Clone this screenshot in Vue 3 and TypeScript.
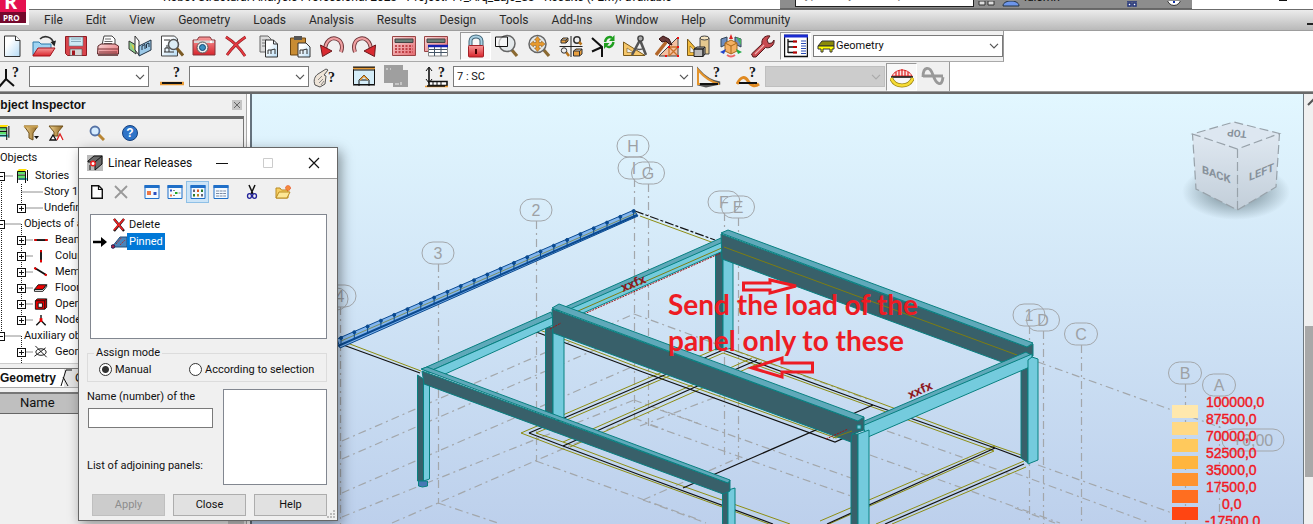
<script setup lang="ts">
import { ref } from 'vue'

const menus = ['File', 'Edit', 'View', 'Geometry', 'Loads', 'Analysis', 'Results', 'Design', 'Tools', 'Add-Ins', 'Window', 'Help', 'Community']

const fileTools = ['new', 'open', 'save', 'print', 'capture', 'preview', 'camera', 'remove', 'copy', 'paste', 'undo', 'redo']
const calcTools = ['calc', 'calctable']
const viewTools = ['lock', 'zoomwin', 'zoomall', 'views', 'refresh', 'compass', 'hammer', 'shapes', 'cube', 'wrench']

interface TreeRow { kind: 'plain' | 'root' | 'story' | 'leaf' | 'sub' | 'child'; label: string; icon?: string; sign?: string }
const tree: TreeRow[] = [
  { kind: 'plain', label: 'Objects' },
  { kind: 'story', label: 'Stories', icon: 'stories', sign: '-' },
  { kind: 'leaf', label: 'Story 1' },
  { kind: 'sub', label: 'Undefined', sign: '+' },
  { kind: 'root', label: 'Objects of a model', sign: '-' },
  { kind: 'child', label: 'Beams', icon: 't-beam', sign: '+' },
  { kind: 'child', label: 'Columns', icon: 't-column', sign: '+' },
  { kind: 'child', label: 'Members', icon: 't-member', sign: '+' },
  { kind: 'child', label: 'Floors', icon: 't-floor', sign: '+' },
  { kind: 'child', label: 'Openings', icon: 't-opening', sign: '+' },
  { kind: 'child', label: 'Nodes', icon: 't-node', sign: '+' },
  { kind: 'root', label: 'Auxiliary objects', sign: '-' },
  { kind: 'child', label: 'Geometry', icon: 't-geom', sign: '+' },
]

const mode = ref('manual')
const panelName = ref('')
const viewModes = ['v-large', 'v-small', 'v-grid', 'v-list']

interface Bubble { t: string; x: number; y: number; w: number; end: number }
const bubbles: Bubble[] = [
  { t: '4', x: 340, y: 296, w: 32, end: 524 },
  { t: '', x: 332, y: 299, w: 32, end: 300 },
  { t: '3', x: 438, y: 253, w: 32, end: 504 },
  { t: '2', x: 536, y: 210, w: 32, end: 462 },
  { t: 'H', x: 633, y: 146, w: 32, end: 157 },
  { t: 'I', x: 634, y: 168, w: 32, end: 420 },
  { t: 'G', x: 648, y: 173, w: 33, end: 426 },
  { t: 'F', x: 724, y: 202, w: 32, end: 455 },
  { t: 'E', x: 738, y: 207, w: 33, end: 460 },
  { t: '1', x: 1029, y: 315, w: 32, end: 524 },
  { t: 'D', x: 1043, y: 320, w: 33, end: 524 },
  { t: 'C', x: 1081, y: 334, w: 33, end: 524 },
  { t: 'B', x: 1185, y: 373, w: 33, end: 524 },
  { t: 'A', x: 1219, y: 385, w: 33, end: 524 },
  { t: '+6,00', x: 1253, y: 440, w: 62, end: 451 },
]

const gridLines = [
  '342,441 634,314', '342,459 634,333', '342,493 634,366', '342,517 634,400', '392,523 634,418',
  '634,314 870,400', '1038,362 1222,428',
  '438,503 498,523', '536,461 700,520', '660,410 851,478', '650,425 851,496', '643,500 706,523',
  '643,500 738,458', '634,418 665,430', '634,400 700,424', '640,426 724,394',
  '870,425 1010,474', '870,455 1060,523',
  '1038,465 1172,513', '1015,473 1150,523', '1015,508 1055,523',
]

const blackLines = [
  '335,342 420,373', '531,330 640,371 835,442 862,430',
  '529,433 723,350', '529,433 563,446 640,475 773,524',
  '563,446 693,388 757,360', '723,350 873,405 995,448 1024,459',
  '995,448 827,524', '1024,464 885,524', '873,405 683,488',
]
const oliveLines = [
  '342,341 421,371', '640,216 714,243', '553,322 537,329 640,368 836,438 860,427',
  '521,433 723,346 880,403 995,446 1024,456', '536,433 723,353 994,451 820,528',
  '521,433 563,449 780,528', '536,433 563,442 640,471 790,524',
  '563,442 690,386 752,358', '570,447 696,391 762,362',
  '995,446 820,521', '1024,461 876,524', '1026,467 892,524',
]

const truss = Array.from({ length: 23 }, (_, i) => ({ x: 341 + i * 13.3, y: 338 - i * 5.77 }))

const legend = [
  { c: '#ffe8ad', t: '100000,0', x: 1206 },
  { c: '#ffd985', t: '87500,0', x: 1206 },
  { c: '#ffc95c', t: '70000,0', x: 1206 },
  { c: '#ffb53d', t: '52500,0', x: 1206 },
  { c: '#ff932e', t: '35000,0', x: 1206 },
  { c: '#ff6e20', t: '17500,0', x: 1206 },
  { c: '#ff4512', t: '0,0', x: 1222 },
  { c: '#ff3010', t: '-17500,0', x: 1205 },
]
</script>

<template>
  <div class="app">
    <svg class="defs" aria-hidden="true">
      <defs>
        <linearGradient id="gBlue" x1="0" y1="0" x2="1" y2="1"><stop offset="0.3" stop-color="#fff" /><stop offset="1" stop-color="#b5dbf5" /></linearGradient>
        <linearGradient id="gRed" x1="0" y1="0" x2="0" y2="1"><stop offset="0" stop-color="#f79a9a" /><stop offset="1" stop-color="#d8242c" /></linearGradient>
        <linearGradient id="gPink" x1="0" y1="0" x2="1" y2="1"><stop offset="0" stop-color="#f9dada" /><stop offset="1" stop-color="#e46a70" /></linearGradient>
        <linearGradient id="gGold" x1="0" y1="0" x2="1" y2="0"><stop offset="0" stop-color="#f3d58f" /><stop offset="1" stop-color="#8d6423" /></linearGradient>
        <linearGradient id="gSky" x1="0" y1="0" x2="0" y2="1"><stop offset="0" stop-color="#e2f7ff" /><stop offset="1" stop-color="#bdd0ec" /></linearGradient>
        <linearGradient id="gCube" x1="0" y1="0" x2="0" y2="1"><stop offset="0" stop-color="#dfe8f1" /><stop offset="1" stop-color="#c2ced9" /></linearGradient>
        <radialGradient id="gShade"><stop offset="0.4" stop-color="#7d929c" stop-opacity="0.75" /><stop offset="1" stop-color="#7d929c" stop-opacity="0" /></radialGradient>
      </defs>
      <symbol id="new" viewBox="0 0 24 24"><path d="M4.500 2h11l4.500 4.500V22.500h-15.500z" fill="url(#gBlue)" stroke="#333" /><path d="M15.500 2v4.500H20" fill="#fff" stroke="#333" /></symbol>
      <symbol id="open" viewBox="0 0 24 24"><path d="M1 21V8h6l2 2h10v5" fill="#9fd4f2" stroke="#2d78a8" /><path d="M1 21.500L6 14h17l-5 8H1z" fill="url(#gRed)" stroke="#a3131b" /><path d="M8 5c4-4 12-3 14 5" fill="none" stroke="#333" stroke-width="1.600" /><path d="M18.500 8l4 4.500L24 6.500z" fill="#222" /></symbol>
      <symbol id="save" viewBox="0 0 24 24"><path d="M1.500 2.500h21v19h-19l-2-2z" fill="#d9444b" stroke="#8e1b22" /><path d="M5 3h14v9H5z" fill="#cdebf4" stroke="#5a7a88" stroke-width=".6" /><path d="M7 5h10M7 7.500h10" stroke="#8ab" /><path d="M6 15h12v6.500H6z" fill="#d5d5d5" stroke="#555" stroke-width=".6" /><path d="M8 16.500h3v4.500H8z" fill="#a3161e" /></symbol>
      <symbol id="print" viewBox="0 0 24 24"><path d="M6 11l2-9h8l3 3v7z" fill="#fff" stroke="#444" /><path d="M9 5h6M8.500 7.500h8M8 9.500h8" stroke="#666" /><path d="M2 12l3-2h14l3.500 2v8h-21z" fill="url(#gPink)" stroke="#5d2a2c" /><path d="M1.500 15h21M3 18h18" stroke="#7d3438" /><path d="M2 20h20v2H2z" fill="#7a5254" /></symbol>
      <symbol id="capture" viewBox="0 0 24 24"><path d="M1 7l7 4v9l-7-5z" fill="#8fd08a" stroke="#333" /><path d="M7 2l4 5v14l-4-5z" fill="#fff" stroke="#333" /><path d="M11 12l12-6v10l-12 6z" fill="#9cc9e8" stroke="#234" /><path d="M14 16v-4l3-1.500V15M18.500 14V10l2.500-1v4" fill="none" stroke="#234" /><path d="M3 10l3 2v4z" fill="#e6cc3c" /></symbol>
      <symbol id="preview" viewBox="0 0 24 24"><path d="M1.500 2h13l3 3v17h-16z" fill="url(#gBlue)" stroke="#444" /><path d="M4 6h6M4 18h10M5 18v-4h4v4M7 14v-3" fill="none" stroke="#333" /><circle cx="13.500" cy="10.500" r="5" fill="#dcecf4" fill-opacity=".9" stroke="#555" stroke-width="1.500" /><path d="M17 14.500l6 7" stroke="#7c5b25" stroke-width="3" /></symbol>
      <symbol id="camera" viewBox="0 0 24 24"><path d="M1 6h4l2-3h11l2 3h3v15H1z" fill="url(#gRed)" stroke="#84353a" /><path d="M2 6.500h20V9H2z" fill="#d7d7d7" /><circle cx="10.500" cy="13.500" r="5.500" fill="#eee" stroke="#555" /><circle cx="10.500" cy="13.500" r="3" fill="#3a8fc0" stroke="#124a73" /><circle cx="19" cy="8" r="1.200" fill="#fff" /></symbol>
      <symbol id="remove" viewBox="0 0 24 24"><path d="M2 3c8 5 14 11 19 19M21.500 3C14 8 8 14 3 21" fill="none" stroke="#8a1a1f" stroke-width="2.800" /><path d="M2 3c8 5 14 11 19 19M21.500 3C14 8 8 14 3 21" fill="none" stroke="#e53a40" stroke-width="1.800" /></symbol>
      <symbol id="copy" viewBox="0 0 24 24"><path d="M4 2h8l3 3v13H4z" fill="#dcdcdc" stroke="#666" /><path d="M6 6h5M6 9h5M6 12h5" stroke="#777" /><path d="M9.500 6h8l4 4v13h-12z" fill="url(#gBlue)" stroke="#333" /><path d="M17.500 6v4h4M12 20v-4h3v4m0-4l4-1v5" fill="none" stroke="#333" /></symbol>
      <symbol id="paste" viewBox="0 0 24 24"><path d="M2.500 4h15v17h-15z" fill="#c98c33" stroke="#6a4410" /><path d="M6 2h8v4H6z" fill="#555" /><path d="M10 9h8l4 4v10H10z" fill="url(#gBlue)" stroke="#333" /><path d="M12 20v-4h3v4m0-4l4-1v5" fill="none" stroke="#333" /></symbol>
      <symbol id="undo" viewBox="0 0 24 24"><path d="M5 17C5 6 12 3 17 5c5 2 6 8 4 13" fill="none" stroke="#6b3438" stroke-width="4" /><path d="M5 17C5 6 12 3 17 5c5 2 6 8 4 13" fill="none" stroke="#f0a0a2" stroke-width="2.200" /><path d="M.5 11l2 11.500L12 17z" fill="#d92a31" stroke="#6b1a1d" /></symbol>
      <symbol id="redo" viewBox="0 0 24 24"><path d="M19 17C19 6 12 3 7 5 2 7 1 13 3 18" fill="none" stroke="#6b3438" stroke-width="4" /><path d="M19 17C19 6 12 3 7 5 2 7 1 13 3 18" fill="none" stroke="#f0a0a2" stroke-width="2.200" /><path d="M23.500 11l-1 11.500L12 17z" fill="#d92a31" stroke="#6b1a1d" /></symbol>
      <symbol id="calc" viewBox="0 0 24 24"><path d="M.5 2.500h23v19H.5z" fill="url(#gPink)" stroke="#944" /><path d="M3 5h18v3.500H3z" fill="#6a8078" stroke="#444" /><path d="M3 12h18M3 15h18M3 18h18" stroke="#b3262c" stroke-width="1.600" stroke-dasharray="2 1.500" /></symbol>
      <symbol id="calctable" viewBox="0 0 24 24"><path d="M.5 2.500h23v15H.5z" fill="url(#gPink)" stroke="#944" /><path d="M3 5h18v3.500H3z" fill="#6a8078" stroke="#444" /><path d="M4.500 11.500h19V22h-19z" fill="#fff" stroke="#888" /><path d="M4 12h20" stroke="#1420b0" stroke-width="2.500" /><path d="M5 15.500h18M5 18.500h18M10.500 13v9M17 13v9" stroke="#456" /></symbol>
      <symbol id="lock" viewBox="0 0 24 24"><path d="M6.500 12V7c0-6 11-6 11 0v5" fill="none" stroke="#3e6275" stroke-width="4" /><path d="M6.500 12V7c0-6 11-6 11 0v5" fill="none" stroke="#a9d0e2" stroke-width="2" /><rect x="4.500" y="11.500" width="15" height="11.500" rx="1" fill="url(#gRed)" stroke="#a32127" /><path d="M12 15v5" stroke="#400" stroke-width="2" /></symbol>
      <symbol id="zoomwin" viewBox="0 0 24 24"><path d="M16 15l6 7" stroke="#8b6a31" stroke-width="3.200" /><circle cx="12" cy="9.500" r="8" fill="#e3e8ea" stroke="#666" stroke-width="1.500" /><path d="M.5 3h12v9.500H.5z" fill="#fff" fill-opacity=".6" stroke="#111" /></symbol>
      <symbol id="zoomall" viewBox="0 0 24 24"><path d="M16 15l6 7" stroke="#8b6a31" stroke-width="3.200" /><circle cx="10.500" cy="10" r="8.500" fill="#e3e8ea" stroke="#666" stroke-width="1.500" /><path d="M10.500 2.500l3 3.500H12v2.500h2.500V7l3.500 3-3.500 3v-1.500H12V14h1.500l-3 3.500-3-3.500H9v-2.500H6.500V13L3 10l3.500-3v1.500H9V6H7.500z" fill="#e79a2e" stroke="#8a5512" stroke-width=".5" /></symbol>
      <symbol id="views" viewBox="0 0 24 24"><path d="M12 2v21M.5 12.500h23" stroke="#222" /><path d="M2 9V6l2-2h5v3L7 9zM2 6h5l2-2M7 6v3" fill="#e9a040" stroke="#333" /><circle cx="18" cy="6" r="3.200" fill="none" stroke="#333" stroke-width="1.500" /><path d="M20 8l2.500 2.500M7 18l3 4" stroke="#b87318" stroke-width="2.500" /><circle cx="5" cy="16.500" r="2.700" fill="#eee" stroke="#333" /><path d="M14.500 22v-5l2.500-2h6v5l-2.500 2zM14.500 17h6l2.500-2M20.500 17v5" fill="#e9a040" stroke="#333" /></symbol>
      <symbol id="refresh" viewBox="0 0 24 24"><path d="M1 4l10 9v10M11 13L1 17.500" fill="none" stroke="#111" stroke-width="2" /><path d="M14 8c1-5 5-6 7-4M22.500 8c-1 5-5 6-7 4" fill="none" stroke="#1f9f1f" stroke-width="2.400" /><path d="M23.500 1v6H18zM13 15V9h5.500z" fill="#1f9f1f" /></symbol>
      <symbol id="compass" viewBox="0 0 24 24"><path d="M.5 8v13.500H22z" fill="#f6c76b" stroke="#7a5a1a" /><path d="M4 14v4.500h7z" fill="#f0f0f0" stroke="#7a5a1a" stroke-width=".6" /><path d="M17 6l-8 15M17 6l6 15" stroke="#555" stroke-width="2.600" /><circle cx="17.500" cy="4.500" r="2.600" fill="#aaa" stroke="#444" stroke-width="1.400" /><path d="M12 14c3 2 6 2 9 0" fill="none" stroke="#555" stroke-width="1.500" /></symbol>
      <symbol id="hammer" viewBox="0 0 24 24"><path d="M4 22L23 3v19z" fill="#f3c0a0" stroke="#444" /><path d="M14 22v-8M23 13h-9M14 13l9 9M14 22l9-9" stroke="#c9732c" stroke-width="1.300" /><path d="M1 21L12 7" stroke="#b3672a" stroke-width="3.400" /><path d="M4 5l4-3 6 3 3 6-3-1-3-3-4 1z" fill="#6a3a3a" stroke="#311" /><path d="M22 3h2v2h-2zM22 12h2v2h-2zM13 12h2v2h-2zM22 21h2v2h-2zM10 21h2v2h-2z" fill="#e11" /></symbol>
      <symbol id="shapes" viewBox="0 0 24 24"><path d="M13 4h9v16h-9z" fill="#e5c98f" stroke="#444" /><ellipse cx="17.500" cy="4" rx="4.500" ry="2" fill="#f5e4c0" stroke="#444" /><path d="M.5 5v16.500H15z" fill="#f2bb3d" stroke="#7a5a1a" /><path d="M3 12v6.500h6z" fill="#f0f0f0" stroke="#7a5a1a" stroke-width=".6" /><path d="M7 15l3-2h8l-2 2zM7 15h9v7.500H7zM16 15l2-2v7l-2 2.500z" fill="#b9b9b9" stroke="#222" /></symbol>
      <symbol id="cube" viewBox="0 0 24 24"><path d="M2 5l6-2v7l-6 3zM16 3l6 2v8l-6-3z" fill="#6f8ec0" stroke="#345" /><path d="M17 3l5 2v6" fill="#48b060" /><path d="M6 9l6-3 6 3v8l-6 3-6-3z" fill="#f4b063" stroke="#a8691c" /><path d="M6 9l6 3 6-3M12 12v8" fill="none" stroke="#a8691c" /><path d="M12 0l2 5h-4z" fill="#d22" /><path d="M1 18l6-3-2 5z" fill="#24c" /><path d="M23 18l-6-3 2 5z" fill="#2a4" /><path d="M8 21q4 3 8 0" fill="none" stroke="#e66" stroke-width="2" /></symbol>
      <symbol id="wrench" viewBox="0 0 24 24"><path d="M2 23l-1.500-3L11 10c-1-5 3-9 8-8l-3 4 1.500 3.500L21 9l2-3c1 5-4 9-8.500 7.500L5 23z" fill="#c84a50" stroke="#501a1c" /><path d="M4 20l9-9" stroke="#f0b0b0" stroke-width="1.300" /></symbol>
      <symbol id="inspector" viewBox="0 0 24 24"><path d="M.5 1.500h23v21H.5z" fill="#fff" stroke="#111" stroke-width="1.400" /><path d="M0 2h24" stroke="#1a2bd0" stroke-width="3" /><path d="M4 5v14M4 7.500h9M4 13h9M4 18.500h9" fill="none" stroke="#111" stroke-width="1.300" /><path d="M9 7.500h4M9 13h4M9 18.500h4" stroke="#b00" stroke-width="2.200" /><path d="M17 7h5M17 9.500h5M17 12h5M17 14.500h5M17 17h5M17 19.500h5" stroke="#2a4bb5" /></symbol>
      <symbol id="axes" viewBox="0 0 24 24"><path d="M8 4v10M8 14l-7 8M8 14l8 7" fill="none" stroke="#111" stroke-width="2" /><text x="14" y="12" class="q">?</text></symbol>
      <symbol id="section" viewBox="0 0 24 24"><path d="M0 18.500h24" stroke="#e89a35" stroke-width="3.500" /><path d="M2 18h20" stroke="#111" stroke-width="2" /><text x="13" y="12" class="q">?</text></symbol>
      <symbol id="hand" viewBox="0 0 24 24"><path d="M2 20c-2-5 0-9 3-11l8-5 2 1-4 5 2 1-1 8-5 3z" fill="#eee4d8" stroke="#555" /><path d="M5 15l4-4M6 18l4-4M8 20l3-4" stroke="#888" /><text x="15" y="17" class="q">?</text></symbol>
      <symbol id="release" viewBox="0 0 24 24"><path d="M1.500 2.500h21v17h-21z" fill="#d5edf8" stroke="#111" /><path d="M1 3.500h22" stroke="#e89a35" stroke-width="2" /><path d="M1 2h22M1 5h22M1 20h22M7 21v-6l5-5 5 5v6M8 15h8" fill="none" stroke="#111" /><path d="M8 15l4-4 4 4" fill="none" stroke="#e89a35" stroke-width="1.500" /></symbol>
      <symbol id="greyed" viewBox="0 0 24 24"><path d="M0 0h19v5h5v17H9v-4H0z" fill="#9f9f9f" /><path d="M2 4h2M6 4h1M11 19h4M17 17v3" stroke="#eee" /></symbol>
      <symbol id="loadcase" viewBox="0 0 24 24"><path d="M5 3v14" stroke="#111" stroke-width="1.600" /><path d="M2 6l3-4 3 4M2 14l3 4 3-4" fill="none" stroke="#111" /><path d="M5 16.500h18v4H5z" fill="#fff" stroke="#111" stroke-width="1.600" /><path d="M9 16v4M13 16v4M17 16v4" stroke="#111" /><path d="M1 21.500h23" stroke="#e89a35" stroke-width="1.500" /><path d="M3 21h18" stroke="#111" stroke-width="1.500" /><text x="14" y="12" class="q">?</text></symbol>
      <symbol id="deform" viewBox="0 0 24 24"><path d="M1 5v14l8 2 14-3C14 17 7 12 1 5z" fill="none" stroke="#555" stroke-width="3" /><path d="M1 5v14h21C14 17 7 12 1 5z" fill="#f0f0f0" stroke="#e3942c" stroke-width="2" /><path d="M3 19h18" stroke="#111" stroke-width="2" /><text x="16" y="12" class="q">?</text></symbol>
      <symbol id="modes" viewBox="0 0 24 24"><path d="M1 19c4-8 8-8 11-3 3 5 7 6 11 3" fill="none" stroke="#e08a22" stroke-width="3" /><path d="M3 18h18" stroke="#111" stroke-width="2" /><text x="13" y="12" class="q">?</text></symbol>
      <symbol id="moment" viewBox="0 0 24 24"><path d="M2 11C6 3 18 3 22 11z" fill="#fbe6e6" stroke="#d22" /><path d="M6 11V7M9 11V5M12 11V4M15 11V5M18 11V7" stroke="#d22" stroke-width="1.200" /><path d="M1 12h22" stroke="#111" stroke-width="1.600" /><path d="M1 13c4 10 18 10 22 0" fill="none" stroke="#9c8514" stroke-width="4" /><path d="M1 13c4 10 18 10 22 0" fill="none" stroke="#f7dc35" stroke-width="2.400" /></symbol>
      <symbol id="wave" viewBox="0 0 24 24"><path d="M2 12C2 1 9 1 12 10s9 13 10 2M2 11h20" fill="none" stroke="#999" stroke-width="2.800" /></symbol>
      <symbol id="stories" viewBox="0 0 12 15"><path d="M1 2l2-2h8L9 2z" fill="#fd0" /><path d="M1 2h8v3H1zM1 6h8v3H1z" fill="#5ee06a" /><path d="M3 9h8v2H3z" fill="#4ad8e8" /><path d="M1.500 14V2.500h8V14M11.500 12V1M1 6h9M1 10h9" fill="none" stroke="#111" /></symbol>
      <symbol id="funnel" viewBox="0 0 16 16"><path d="M1 1h14L10 8v7l-4-2V8z" fill="url(#gGold)" stroke="#6e501b" /><path d="M1 1.500h14" stroke="#c9a050" stroke-width="2" /><path d="M11 11h5l-2.500 3z" fill="#111" /></symbol>
      <symbol id="funnel2" viewBox="0 0 16 16"><path d="M1 1h14l-5 6v4H6V7z" fill="url(#gGold)" stroke="#6e501b" /><path d="M2 15l3-5 3 5z" fill="#fff" stroke="#111" stroke-width="1.300" /><path d="M9 15l3-6 3 6" fill="#fff" stroke="#d22" stroke-width="1.300" /></symbol>
      <symbol id="find" viewBox="0 0 16 16"><path d="M9 9l6 6" stroke="#b98634" stroke-width="3" /><circle cx="6" cy="6" r="4.500" fill="#d5ecff" stroke="#5572a5" stroke-width="1.800" /></symbol>
      <symbol id="helpball" viewBox="0 0 16 16"><circle cx="8" cy="8" r="7.500" fill="#2f74c8" stroke="#16417e" /><text x="8" y="12" class="hq">?</text></symbol>
      <symbol id="t-beam" viewBox="0 0 16 16"><path d="M1 7.500h14" stroke="#111" stroke-width="2" /><path d="M1 7.500h2.500M12.500 7.500H15" stroke="#e00" stroke-width="2" /></symbol>
      <symbol id="t-column" viewBox="0 0 16 16"><path d="M8 1v13" stroke="#111" stroke-width="2" /><path d="M8 1v2.500M8 11.500V14" stroke="#e00" stroke-width="2" /></symbol>
      <symbol id="t-member" viewBox="0 0 16 16"><path d="M1 3l13 8" stroke="#111" stroke-width="2" /><path d="M1 3l2 1.500M12 10l2 1" stroke="#e00" stroke-width="2.200" /></symbol>
      <symbol id="t-floor" viewBox="0 0 16 16"><path d="M1 9l4-5h9l-4 5z" fill="#e00" stroke="#111" /><path d="M1 9v2h9l4-5V4l-4 5z" fill="#fff" stroke="#111" /></symbol>
      <symbol id="t-opening" viewBox="0 0 16 16"><path d="M2 4l2-2h10v9l-2 2H2z" fill="#e00" stroke="#111" /><path d="M2 4h10v9M12 4l2-2" fill="none" stroke="#111" /><path d="M5 6.500h4.500V11H5z" fill="#fff" stroke="#111" /></symbol>
      <symbol id="t-node" viewBox="0 0 16 16"><path d="M8 2v6M8 8l-5 5M8 8l5 5" fill="none" stroke="#111" stroke-width="1.500" /><path d="M6.500 5.500h3v4h-3z" fill="#e00" /></symbol>
      <symbol id="t-geom" viewBox="0 0 16 16"><path d="M2 1l12 12M1 12L13 3" stroke="#111" /><ellipse cx="8" cy="7.500" rx="5.500" ry="3.500" fill="none" stroke="#111" /></symbol>
      <symbol id="dlg" viewBox="0 0 16 16"><path d="M0 0h16v16H0z" fill="#bbb" /><path d="M1 6l6-5h8v8l-7 6V7H1z" fill="#6a6a6a" stroke="#111" /><path d="M8 7l7-6M3 10v5" stroke="#111" /><circle cx="6" cy="8.500" r="2.200" fill="#fff" stroke="#e22" stroke-width="1.400" /></symbol>
      <symbol id="d-new" viewBox="0 0 16 16"><path d="M2.700 1.700h7l3.600 3.600v9H2.700z" fill="#fff" stroke="#111" stroke-width="1.400" /><path d="M9.500 2v3.500H13" fill="none" stroke="#111" stroke-width="1.200" /></symbol>
      <symbol id="d-del" viewBox="0 0 16 16"><path d="M2 2l12 12M14 2L2 14" stroke="#999" stroke-width="1.800" /></symbol>
      <symbol id="v-large" viewBox="0 0 16 16"><path d="M1 1.500h14v13H1z" fill="#f4faff" stroke="#1f6fc8" /><path d="M.5 2.500h15" stroke="#1f6fc8" stroke-width="3" /><path d="M3 7h4v4H3z" fill="#ee7744" /><path d="M9.500 8h3v3h-3z" fill="#2b4fc0" /></symbol>
      <symbol id="v-small" viewBox="0 0 16 16"><path d="M1 1.500h14v13H1z" fill="#f4faff" stroke="#1f6fc8" /><path d="M.5 2.500h15" stroke="#1f6fc8" stroke-width="3" /><path d="M3 5.500h2v2H3z" fill="#2b4fc0" /><path d="M3 10.500h2v2H3z" fill="#ee7744" /><path d="M8 8h2.500v2H8z" fill="#2a2" /><path d="M6 6.500h2M6 11.500h2M11.500 9h2" stroke="#888" /></symbol>
      <symbol id="v-grid" viewBox="0 0 16 16"><path d="M1 1.500h14v13H1z" fill="#f4faff" stroke="#1f6fc8" /><path d="M.5 2.500h15" stroke="#1f6fc8" stroke-width="3" /><path d="M3 5.500h2v2.500H3zM11 10h2v2.500h-2z" fill="#667" /><path d="M7 5.500h2v2.500H7z" fill="#d52" /><path d="M11 5.500h2v2.500h-2zM3 10h2v2.500H3z" fill="#2a7a2a" /><path d="M7 10h2v2.500H7z" fill="#b38a20" /></symbol>
      <symbol id="v-list" viewBox="0 0 16 16"><path d="M1 1.500h14v13H1z" fill="#f4faff" stroke="#1f6fc8" /><path d="M.5 2.500h15" stroke="#1f6fc8" stroke-width="3" /><path d="M3 7h10M3 9.500h10M3 12h10" stroke="#7a8aa5" stroke-dasharray="3 .6" /></symbol>
      <symbol id="scissors" viewBox="0 0 16 16"><path d="M5 1l4 9M11 1L7 10" stroke="#111" stroke-width="1.500" /><ellipse cx="5.500" cy="12" rx="2" ry="2.300" fill="none" stroke="#229" stroke-width="1.300" /><ellipse cx="10.500" cy="12" rx="2" ry="2.300" fill="none" stroke="#229" stroke-width="1.300" /></symbol>
      <symbol id="folder" viewBox="0 0 16 16"><path d="M1 14V4h4l1.500 2H13v8z" fill="#f7cf62" stroke="#b98a20" /><path d="M1 14l3-6h11l-3 6z" fill="#fde796" stroke="#b98a20" /><circle cx="13" cy="4" r="2.500" fill="#f58a3c" stroke="#e8502a" stroke-dasharray="1 1" /></symbol>
      <symbol id="redx" viewBox="0 0 14 14"><path d="M2 1l10 12M12 1L2 13" stroke="#111" stroke-width="2.400" /><path d="M2 1l9 11M12 1L2 12" stroke="#e22" stroke-width="1.800" /></symbol>
      <symbol id="pin" viewBox="0 0 16 14"><path d="M1 12L9 2h7v10z" fill="#4b83b8" stroke="#234e7c" /><path d="M5 9l6-7M9 10l5-5" stroke="#a33" stroke-dasharray="2 1" /><circle cx="2" cy="11.500" r="1.800" fill="#a24" stroke="#225" /></symbol>
      <symbol id="chev" viewBox="0 0 10 6"><path d="M1 .8l4 4 4-4" fill="none" stroke="currentColor" stroke-width="1.200" /></symbol>
    </svg>

    <header class="titlebar">
      <h1 class="title">Robot Structural Analysis Professional 2023 - Project: 11_Arq_Laje_S3 - Results (FEM): available</h1>
      <div class="infocenter">
        <input class="search" type="text" placeholder="Type a keyword or phrase" aria-label="Search" />
        <svg class="binoc" viewBox="0 0 18 6"><path d="M1 0h6v4H1zM10 0h6v4h-6z" fill="#ddd" stroke="#333" /></svg>
        <svg class="usericon" viewBox="0 0 18 6"><path d="M1 5c0-4 5-5 8-5s8 1 8 5z" fill="#6d95ea" stroke="#234" /></svg>
        <button class="user" type="button">luismn</button>
        <svg class="cart" viewBox="0 0 12 6"><path d="M1 0h10M2 2h3v3H2zM7 2h3v3H7z" fill="#fff" stroke="#23357c" stroke-width="1.500" /></svg>
        <svg class="ask" viewBox="0 0 16 6"><path d="M1 -3a7 7.500 0 0 0 14 0z" fill="#fff" stroke="#333" /><path d="M7 0h2v2H7z" fill="#13a" /></svg>
      </div>
      <span class="mini"></span>
    </header>

    <div class="logo"><span class="r">R</span><span class="pro">PRO</span></div>
    <nav class="menubar">
      <button v-for="m in menus" :key="m" type="button">{{ m }}</button>
      <span class="childmin"></span>
    </nav>

    <div class="toolrow">
      <div class="toolbar first">
        <button v-for="i in fileTools" :key="i" class="tool" type="button" :aria-label="i"><svg><use :href="'#' + i" /></svg></button>
        <i class="g8"></i>
        <button v-for="i in calcTools" :key="i" class="tool" type="button" :aria-label="i"><svg><use :href="'#' + i" /></svg></button>
        <i class="g8"></i>
        <button v-for="i in viewTools" :key="i" class="tool" :class="{ on: i === 'lock' }" type="button" :aria-label="i"><svg><use :href="'#' + i" /></svg></button>
        <i class="g1"></i>
        <button class="tool on" type="button" aria-label="inspector"><svg><use href="#inspector" /></svg></button>
        <div class="combo layout">
          <svg class="bus" viewBox="0 0 18 14"><path d="M1 7l4-5h12v5z" fill="#8a8a08" stroke="#333" /><path d="M1 7h16v3h-2v3h-2v-3H6v3H4v-3H1z" fill="#ff0" stroke="#333" /></svg>
          <select aria-label="Layout"><option>Geometry</option></select>
          <svg class="chev"><use href="#chev" /></svg>
        </div>
      </div>
    </div>
    <div class="toolrow second">
      <div class="toolbar">
        <button class="tool edge" type="button" aria-label="axes"><svg><use href="#axes" /></svg></button>
        <i class="g3"></i>
        <div class="combo"><select aria-label="Nodes"><option></option></select><svg class="chev"><use href="#chev" /></svg></div>
        <i class="g7"></i>
        <button class="tool" type="button" aria-label="section"><svg><use href="#section" /></svg></button>
        <i class="g1"></i>
        <div class="combo"><select aria-label="Bars"><option></option></select><svg class="chev"><use href="#chev" /></svg></div>
        <button class="tool" type="button" aria-label="hand"><svg><use href="#hand" /></svg></button>
        <i class="g7"></i>
        <button class="tool" type="button" aria-label="release"><svg><use href="#release" /></svg></button>
        <button class="tool" type="button" aria-label="attributes"><svg><use href="#greyed" /></svg></button>
        <i class="g8"></i>
        <button class="tool" type="button" aria-label="load case"><svg><use href="#loadcase" /></svg></button>
        <i class="g1"></i>
        <div class="combo wide"><select aria-label="Case"><option>7 : SC</option></select><svg class="chev"><use href="#chev" /></svg></div>
        <button class="tool" type="button" aria-label="deformation"><svg><use href="#deform" /></svg></button>
        <i class="g7"></i>
        <button class="tool" type="button" aria-label="modes"><svg><use href="#modes" /></svg></button>
        <i class="g1"></i>
        <div class="combo off"><select aria-label="Mode" disabled><option></option></select><svg class="chev"><use href="#chev" /></svg></div>
        <i class="g1"></i>
        <button class="tool on" type="button" aria-label="moment"><svg><use href="#moment" /></svg></button>
        <button class="tool" type="button" aria-label="wave"><svg><use href="#wave" /></svg></button>
      </div>
    </div>

    <main class="work">
      <aside class="panel">
        <div class="phead"><h2>Object Inspector</h2><button type="button" aria-label="Close panel"><svg viewBox="0 0 10 10"><path d="M2 2l6 6M8 2L2 8" stroke="#666" /></svg></button></div>
        <div class="pbody">
          <div class="ptools">
            <button type="button" aria-label="Stories"><svg><use href="#stories" /></svg></button>
            <button type="button" aria-label="Filter"><svg><use href="#funnel" /></svg></button>
            <button type="button" aria-label="Filter by support"><svg><use href="#funnel2" /></svg></button>
            <button class="far" type="button" aria-label="Find"><svg><use href="#find" /></svg></button>
            <button class="last" type="button" aria-label="Help"><svg><use href="#helpball" /></svg></button>
          </div>
          <div class="tree">
            <svg class="wires" viewBox="0 0 80 216"><path d="M1.500 28v150M1.500 28h12M21.500 36v24M21.500 44H43M21.500 60H43M1.500 76H21M21.500 76v96M21.500 92h12M21.500 108h12M21.500 124h12M21.500 140h12M21.500 156h12M21.500 172h12M1.500 188H21M21.500 188v28M21.500 204h12M1.500 178v10" /></svg>
            <div v-for="row in tree" :key="row.label + row.kind" class="row" :class="row.kind">
              <span v-if="row.sign" class="exp" :class="{ plus: row.sign === '+' }"></span>
              <svg v-if="row.icon" class="ticon"><use :href="'#' + row.icon" /></svg>
              <span class="tlabel">{{ row.label }}</span>
            </div>
          </div>
        </div>
        <div class="tabs"><button class="active" type="button">Geometry</button><svg class="slash" viewBox="0 0 12 18"><path d="M1 17L6 1h6M3 8l5 9" fill="none" stroke="#111" /></svg><button type="button">Groups</button></div>
        <div class="props">
          <div class="phd"><span class="name">Name</span></div>
          <div class="pfill"><span class="thumb"></span></div>
        </div>
      </aside>

      <section class="view">
        <svg class="scene" viewBox="252 94 1051 430" preserveAspectRatio="xMidYMid slice">
          <rect x="252" y="94" width="1051" height="430" fill="url(#gSky)" />
          <g class="grid">
            <polyline v-for="p in gridLines" :key="p" :points="p" />
            <line v-for="b in bubbles" :key="b.t + b.x" :x1="b.x + 0.5" :x2="b.x + 0.5" :y1="b.y + 11" :y2="b.end" />
          </g>
          <g class="bubbles">
            <g v-for="b in bubbles" :key="b.t + b.y">
              <rect :x="b.x - b.w / 2" :y="b.y - 11" :width="b.w" height="22" rx="11" />
              <text :x="b.x" :y="b.y + 6">{{ b.t }}</text>
            </g>
          </g>
          <g class="olive"><polyline v-for="p in oliveLines" :key="p" :points="p" /></g>
          <g class="black"><polyline v-for="p in blackLines" :key="p" :points="p" /><polyline points="635,211 715,240" stroke-dasharray="9 2 3 2" /></g>

          <g class="truss">
            <path d="M337 339L634 210L638 216L340 348z" fill="#82b5ee" />
            <path d="M338 346L637 215" stroke-width="2" />
            <path d="M341 341L636 213" class="ol" />
            <path v-for="t in truss" :key="t.x" :d="`M${t.x} ${t.y}v7`" />
            <circle v-for="t in truss" :key="'c' + t.x" :cx="t.x" :cy="t.y" r="1.500" fill="#0a4a90" />
          </g>

          <g class="steel">
            <path class="d" d="M715.500 252h7.500v96l-7.500 2z" /><path class="l" d="M723 256h10v92l-10 2z" />
            <path class="t" d="M556 311L721 238L724 242L570 310z" /><path class="l" d="M570 309L723 242V251L583 313z" />
            <path class="ol" d="M578 311L724 247" /><path class="red" d="M584 314L730 249" />
            <path class="d" d="M721 234L1027 347L1033 344V356L1002 362L722 259z" />
            <path class="t" d="M721 233L728 230L1033 343L1027 347z" />
            <path class="ol" d="M724 247L1017 355" />
            <path class="d" d="M1021 364h7v99l-7-5z" />
            <path class="t" d="M862 422L1026 352L1031 355L864 427z" />
            <path class="l" d="M862 426L1032 354V366L868 437z" />
            <path class="l" d="M1028 360l4-3 6 2v101l-10 4z" />
            <path class="d" d="M545.500 327h7.500v90l-7.500-4z" /><path class="l" d="M553 330h11v88h-11z" />
            <path class="t" d="M422 369L551 312L553 317L428 372z" /><path class="l" d="M428 372L553 317V325L443 375z" />
            <path class="d" d="M851 434h7v92h-7z" /><path class="l" d="M858 434l11-4v96h-11z" />
            <path class="d" d="M552 309L858 421L864 417V430L852 434L851 442L553 333z" />
            <path class="t" d="M552 308L559 304L864 417L858 421z" />
            <path class="red" d="M826 439L848 429M550 329L561 323" /><path class="ol" d="M833 438L852 431" /><rect x="857" y="425" width="4" height="4" class="l" />
            <path class="d" d="M417.500 375l6 4v102h-6z" /><path class="l" d="M423.500 380h6v99l-6 2z" />
            <path d="M418.500 481h9v5l-5 1-4-1z" fill="#4778b4" stroke="#164880" />
            <path class="d" d="M722.500 490h5.500v36h-5.500z" /><path class="l" d="M728 490l7-2v38h-7z" />
            <path class="d" d="M422 371L728 483L730 480V491L723 494L424 384z" />
            <path class="t" d="M421 369L427 367L730 480L728 483z" />
          </g>
          <text class="xx" transform="translate(623 292) rotate(-22)">xxfx</text>
          <text class="xx" transform="translate(910 399) rotate(-24)">xxfx</text>

          <g class="note">
            <text x="668" y="315">Send the load of the</text>
            <text x="668" y="351">panel only to these</text>
            <path d="M743.500 283H770V280L796 286L770 293V290H743.500z" />
            <path d="M812.500 363H782V358L752 368L782 377V372H812.500z" />
          </g>

          <g class="legend">
            <g v-for="(s, i) in legend" :key="s.t">
              <rect x="1172" :y="405 + i * 17" width="26" height="13" :fill="s.c" />
              <text :x="s.x" :y="407 + i * 17">{{ s.t }}</text>
            </g>
          </g>

          <g class="vcube">
            <ellipse cx="1236" cy="192" rx="54" ry="28" fill="url(#gShade)" />
            <path d="M1192.500 134L1237.500 149V210L1196 189z" fill="url(#gCube)" />
            <path d="M1237.500 149L1279.500 133.500L1276 187L1237.500 210z" fill="url(#gCube)" />
            <path d="M1192.500 134L1234 122L1279.500 133.500L1237.500 149z" fill="#dde7f1" />
            <path class="dash" d="M1237.500 149L1192.500 134L1234 122L1279.500 133.500zV210L1196 189L1192.500 134M1237.500 210L1276 187L1279.500 133.500" />
            <text transform="translate(1202 173) skewY(20)">BACK</text>
            <text transform="translate(1249 181) skewY(-22)">LEFT</text>
            <text class="top" transform="translate(1247 131) rotate(186)">TOP</text>
          </g>
        </svg>
      </section>

      <div class="vscroll"><svg viewBox="0 0 9 16"><path d="M4 11l5-5 5 5" fill="none" stroke="#555" stroke-width="2" /></svg><span></span></div>
    </main>

    <section class="dialog" role="dialog" aria-labelledby="dlgTitle">
      <div class="dhead">
        <svg class="dicon"><use href="#dlg" /></svg>
        <h2 id="dlgTitle">Linear Releases</h2>
        <button type="button" aria-label="Minimize"><svg viewBox="0 0 12 12"><path d="M0 6.500h12" stroke="#111" /></svg></button>
        <button type="button" aria-label="Maximize" disabled><svg viewBox="0 0 12 12"><path d="M1.500 1.500h9v9h-9z" fill="none" stroke="#ccc" /></svg></button>
        <button type="button" aria-label="Close window"><svg viewBox="0 0 12 12"><path d="M1 1l10 10M11 1L1 11" stroke="#111" stroke-width="1.200" /></svg></button>
      </div>
      <div class="dbody">
        <div class="dtools">
          <button type="button" aria-label="New"><svg><use href="#d-new" /></svg></button>
          <button type="button" aria-label="Delete item"><svg><use href="#d-del" /></svg></button>
          <i class="g7"></i>
          <button v-for="v in viewModes" :key="v" type="button" :class="{ sel: v === 'v-grid' }" :aria-label="v"><svg><use :href="'#' + v" /></svg></button>
          <i class="g8"></i>
          <button type="button" aria-label="Cut"><svg><use href="#scissors" /></svg></button>
          <i class="g8"></i>
          <button type="button" aria-label="Open library"><svg><use href="#folder" /></svg></button>
        </div>
        <ul class="list" role="listbox" aria-label="Releases">
          <li role="option"><span class="arrow"></span><svg><use href="#redx" /></svg><span class="lt">Delete</span></li>
          <li role="option" aria-selected="true"><span class="arrow"><svg viewBox="0 0 14 10"><path d="M0 5h9" stroke="#000" stroke-width="2.500" /><path d="M8 0l6 5-6 5z" /></svg></span><svg><use href="#pin" /></svg><span class="lt picked">Pinned</span></li>
        </ul>
        <fieldset>
          <legend>Assign mode</legend>
          <label><input v-model="mode" type="radio" name="mode" value="manual" />Manual</label>
          <label><input v-model="mode" type="radio" name="mode" value="selection" />According to selection</label>
        </fieldset>
        <div class="fields">
          <div class="left">
            <label for="pname">Name (number) of the</label>
            <input id="pname" v-model="panelName" type="text" />
            <span id="adj" class="adj">List of adjoining panels:</span>
          </div>
          <div class="box" role="listbox" aria-labelledby="adj"></div>
        </div>
        <div class="actions">
          <button type="button" disabled>Apply</button>
          <button type="button">Close</button>
          <button type="button">Help</button>
        </div>
      </div>
      <svg class="grip" viewBox="0 0 9 9"><path d="M6 0h2v2H6zM3 3h2v2H3zM6 3h2v2H6zM0 6h2v2H0zM3 6h2v2H3zM6 6h2v2H6z" fill="#bbb" /></svg>
    </section>
  </div>
</template>

<style>
body { overflow: hidden; }
.q { font: bold 14px "Liberation Serif", serif; fill: #111; }
.hq { font: bold 12px "Liberation Sans", sans-serif; fill: #fff; text-anchor: middle; }
</style>

<style scoped>
.app { position: relative; display: flex; flex-direction: column; height: 100vh; overflow: hidden; background: #fff; font: 12px/16px Roboto, "Noto Sans", sans-serif; color: #111; }
.app *, .app *::before { box-sizing: border-box; }
button, input, select { font: inherit; color: inherit; }
button { padding: 0; border: 0; background: none; }
h1, h2, ul { margin: 0; padding: 0; font-size: inherit; font-weight: normal; list-style: none; }
.defs { position: absolute; width: 0; height: 0; }
.g1, .g3, .g7, .g8 { flex: none; width: 1px; }
.g3 { width: 3px; }
.g7 { width: 7px; }
.g8 { width: 8px; }

.titlebar { display: flex; flex: none; align-items: flex-end; height: 9px; overflow: hidden; }
.title { flex: 1; padding: 0 0 4px 163px; line-height: 16px; white-space: nowrap; }
.infocenter { display: flex; align-items: flex-end; width: 412px; height: 9px; padding: 0 0 1px 15px; background: #8d8d8d; border-bottom: 1px solid #666; }
.search { width: 179px; height: 20px; padding: 0 2px 6px; border: 1px solid #222; border-top: 0; font-size: 12px; line-height: 13px; }
.search::placeholder { color: #777; }
.binoc { width: 18px; height: 6px; margin-left: 4px; }
.usericon { width: 18px; height: 6px; margin-left: 6px; }
.user { height: 16px; margin: 0 0 2px 4px; line-height: 14px; }
.cart { width: 12px; height: 6px; margin-left: 66px; }
.ask { width: 16px; height: 6px; margin-left: 28px; }
.mini { align-self: flex-start; width: 8px; height: 1px; margin: 0 26px 0 87px; background: #111; }

.logo { position: absolute; left: 0; top: 0; width: 29px; height: 25px; background: #fff; overflow: hidden; color: #fff; }
.logo .r { display: flex; align-items: flex-end; width: 26px; height: 12px; background: #e51050; padding-left: 4px; font: bold 20px/20px "Open Sans", sans-serif; }
.logo .pro { display: block; width: 26px; height: 11px; background: #74082c; padding-left: 3px; font: bold 8px/11px "Open Sans", sans-serif; }

.menubar { display: flex; flex: none; gap: 23px; align-items: center; height: 22px; padding-left: 44px; background: linear-gradient(#ececec, #b9b9b9); border-top: 1px solid #6c6c6c; border-bottom: 1px solid #9d9d9d; }
.menubar button { line-height: 20px; color: #2a2a2a; }
.childmin { width: 6px; height: 2px; margin: 8px 0 0 auto; background: #222; }

.toolrow { display: flex; flex: none; height: 31px; }
.toolbar { display: flex; align-items: center; flex: none; height: 31px; background: #f0f0f0; border-right: 1px solid #999; border-bottom: 1px solid #aaa; }
.first .tool:first-child { margin-left: -4px; }
.second { height: 30px; border-bottom: 1px solid #999; }
.second .toolbar { height: 29px; border-bottom: 0; }
.tool { display: flex; flex: none; align-items: center; justify-content: center; width: 32px; height: 28px; }
.tool svg { width: 24px; height: 24px; }
.tool.edge { margin-left: -6px; }
.tool.on { width: 31px; background: #f8f8f8; border: 1px solid #999; border-right-color: #fff; border-bottom-color: #fff; }
.combo { position: relative; flex: none; width: 120px; }
.combo select { display: block; width: 100%; height: 21px; padding: 0 3px; border: 1px solid #7a7a7a; border-radius: 0; background: #fff; appearance: none; font: 11px/16px Roboto, "Liberation Sans", sans-serif; }
.combo .chev { position: absolute; right: 4px; top: 8px; width: 10px; height: 6px; color: #555; }
.combo.wide { width: 240px; }
.combo.layout { width: 190px; margin-left: 2px; }
.combo.layout select { height: 22px; padding-left: 22px; }
.bus { position: absolute; left: 4px; top: 4px; width: 18px; height: 14px; }
.combo.off select { background: #ccc; border-color: #bfbfbf; opacity: 1; }
.combo.off .chev { color: #aaa; }

.work { display: flex; flex: 1; min-height: 0; border-top: 2px solid #696969; }
.panel { display: flex; flex-direction: column; flex: none; width: 252px; overflow: hidden; background: #f0f0f0; border-right: 2px solid #65727d; box-shadow: inset -3px 0 #fff, inset -4px 0 #aaa; }
.phead { display: flex; flex: none; align-items: center; justify-content: space-between; height: 22px; padding-right: 8px; }
.phead h2 { margin-left: -9px; font: bold 12px/16px "Liberation Sans", sans-serif; }
.phead button { display: flex; width: 10px; height: 10px; background: #c4c4c4; }
.phead svg { width: 10px; height: 10px; }
.pbody { flex: none; width: 244px; border-top: 3px solid #6b6b6b; border-right: 1px solid #777; }
.ptools { display: flex; align-items: center; height: 29px; border-bottom: 1px solid #777; }
.ptools button { width: 16px; height: 16px; margin-right: 9px; }
.ptools button:first-child { margin: 0 12px 0 -5px; }
.ptools .far { margin-left: 16px; }
.ptools .last { margin-left: 8px; }
.ptools svg { display: block; width: 16px; height: 16px; }
.tree { position: relative; height: 216px; background: #fff; border-bottom: 1px solid #ccc; font: 11px/16px Roboto, "Liberation Sans", sans-serif; overflow: hidden; }
.wires { position: absolute; left: 0; top: 0; width: 80px; height: 216px; }
.wires path { fill: none; stroke: #222; stroke-dasharray: 1 1; }
.row { position: relative; display: flex; align-items: center; height: 16px; white-space: nowrap; }
.row.plain { height: 20px; }
.exp { position: relative; flex: none; width: 9px; height: 9px; margin-left: 17px; background: #fff; border: 1px solid #111; }
.exp::before { content: ""; position: absolute; left: 1px; top: 3px; width: 5px; height: 1px; background: #111; }
.exp.plus::after { content: ""; position: absolute; left: 3px; top: 1px; width: 1px; height: 5px; background: #111; }
.root .exp, .story .exp { margin-left: -4px; }
.root .tlabel { margin-left: 19px; }
.ticon { flex: none; width: 16px; height: 15px; margin-left: 7px; }
.story .ticon { margin-left: 9px; }
.story .tlabel { margin-left: 5px; }
.leaf .tlabel { margin-left: 44px; }
.sub .tlabel { margin-left: 18px; }
.child .tlabel { margin-left: 6px; }
.tabs { display: flex; flex: none; align-items: center; height: 20px; margin-top: 4px; border-top: 1px solid #777; border-bottom: 1px solid #aaa; background: linear-gradient(90deg, #fff 64px, #e3e3e3 64px); font: 12px/18px "Liberation Sans", sans-serif; }
.tabs .active { font-weight: bold; }
.tabs .slash { width: 12px; height: 18px; margin: 0 3px 0 4px; }
.props { display: flex; flex: 1; flex-direction: column; width: 244px; margin-top: 4px; border-top: 2px solid #777; }
.phd { display: flex; height: 20px; background: #bfbfbf; border-bottom: 1px solid #666; font-size: 13px; line-height: 18px; }
.phd .name { padding-left: 20px; }
.pfill { display: flex; flex: 1; justify-content: flex-end; }
.pfill .thumb { width: 16px; background: #c6c6c6; }

.view { flex: 1; min-width: 0; background: #cfe3f6; }
.scene { display: block; width: 100%; height: 100%; }
.vscroll { display: flex; flex: none; flex-direction: column; width: 10px; background: #f0f0f0; border-left: 1px solid #6d7880; overflow: hidden; }
.vscroll svg { width: 9px; height: 16px; }
.vscroll span { height: 151px; margin: 216px 0 0 1px; background: #a8a8a8; }

.grid { fill: none; stroke: #a3a7ab; stroke-width: 1.200; stroke-dasharray: 8 4 2 4; }
.bubbles { fill: none; stroke: #a3a7ab; }
.bubbles text { font: 16px "Liberation Sans", sans-serif; fill: #9da1a5; stroke: none; text-anchor: middle; }
.olive { fill: none; stroke: #8d8d12; }
.ol { fill: none; stroke: #8d8d12; }
.black { fill: none; stroke: #111; stroke-width: 1.200; }
.truss { fill: none; stroke: #0a4a90; }
.truss .ol { stroke: #7c8f60; }
.steel path, .steel rect { stroke: #088080; stroke-linejoin: round; }
.steel .t { fill: #5fa9ba; }
.steel .l { fill: #74cbdd; }
.steel .d { fill: #38606a; }
.steel path.ol { fill: none; stroke: #7d7d12; }
.steel path.red { fill: none; stroke: #a01515; stroke-dasharray: 2 1; }
.xx { font: bold 12px "Noto Sans", sans-serif; fill: #8d1a22; }
.note text { font: bold 28px Lato, sans-serif; fill: #ed1c24; }
.note path { fill: none; stroke: #ed1c24; stroke-width: 3; }
.legend text { font: 14px "Liberation Sans", sans-serif; fill: #f01822; stroke: #f01822; stroke-width: .4; }
.vcube .dash { fill: none; stroke: #98a2aa; stroke-width: 1.200; stroke-dasharray: 9 4; }
.vcube text { font: bold 11px Roboto, sans-serif; fill: #87919b; }
.vcube text.top { font-size: 10px; }

.dialog { position: absolute; left: 78px; top: 147px; width: 260px; background: #f0f0f0; border: 1px solid #666; box-shadow: 3px 4px 12px rgba(0, 0, 0, .4); font: 11px/16px Roboto, "Noto Sans", sans-serif; }
.dhead { display: flex; align-items: center; height: 31px; padding-left: 8px; background: #fff; border-bottom: 1px solid #999; }
.dicon { width: 16px; height: 16px; }
.dhead h2 { flex: 1; margin-left: 5px; font-size: 12px; white-space: nowrap; }
.dhead button { display: flex; align-items: center; justify-content: center; width: 46px; height: 28px; }
.dhead button svg { width: 12px; height: 12px; }
.dbody { padding: 1px 10px 4px 11px; }
.dtools { display: flex; align-items: center; height: 23px; margin-left: -5px; }
.dtools button { display: flex; align-items: center; justify-content: center; width: 24px; height: 22px; }
.dtools button:nth-of-type(n+3) { width: 23px; }
.dtools .sel { background: #cce4f7; border: 1px solid #8fc0e6; }
.dtools svg { width: 16px; height: 16px; }
.list { height: 125px; margin-top: 11px; padding: 1px; background: #fff; border: 1px solid #828790; }
.list li { display: flex; align-items: center; height: 17px; }
.list .arrow { display: flex; width: 15px; margin-right: 4px; padding-left: 1px; }
.list .arrow svg { width: 14px; height: 10px; }
.list svg { width: 16px; height: 14px; }
.lt { padding: 0 2px; line-height: 17px; }
.picked { background: #0078d7; color: #fff; }
fieldset { display: flex; align-items: center; height: 36px; margin: 7px 0 0 -3px; padding: 0 0 2px 11px; border: 1px solid #dcdcdc; }
legend { margin-left: -5px; padding: 0 2px; line-height: 14px; }
fieldset label { display: flex; align-items: center; width: 90px; white-space: nowrap; }
input[type="radio"] { flex: none; appearance: none; width: 13px; height: 13px; margin: 0 3px 0 0; border: 1px solid #333; border-radius: 50%; background: #fff; }
input[type="radio"]:checked { background: radial-gradient(circle, #333 3px, #fff 4px); }
.fields { display: flex; justify-content: space-between; margin: 7px 0 0 -3px; }
.left { display: flex; flex-direction: column; width: 126px; white-space: nowrap; }
.left input { height: 20px; margin: 3px 0 30px 1px; padding: 0 3px; border: 1px solid #7a7a7a; background: #fff; }
.box { width: 104px; height: 96px; background: #fff; border: 1px solid #828790; }
.actions { display: flex; gap: 8px; margin: 9px 0 0 2px; }
.actions button { flex: 1; height: 22px; background: #e1e1e1; border: 1px solid #adadad; }
.actions button:disabled { background: #ccc; border-color: #bfbfbf; color: #8d8d8d; }
.grip { position: absolute; right: 1px; bottom: 1px; width: 9px; height: 9px; }
</style>
